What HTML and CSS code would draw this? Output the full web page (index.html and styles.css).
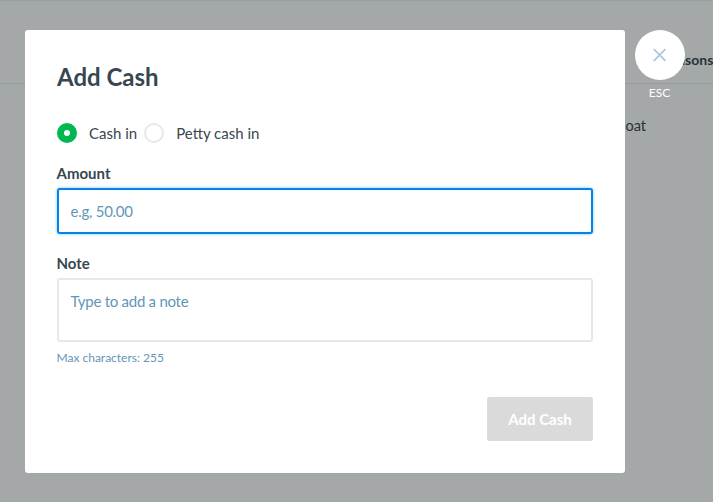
FILE: index.html
```html
<!DOCTYPE html>
<html lang="en">
<head>
<meta charset="utf-8">
<title>Add Cash</title>
<link rel="stylesheet" href="styles.css">
</head>
<body>
<div class="page">
  <div class="row head"><span>Reasons</span></div>
  <div class="row cell"><span>Float</span></div>
</div>
<div class="overlay">
  <form class="modal">
    <h1 class="title">Add Cash</h1>
    <div class="radios">
      <label class="radio"><span class="dot on"></span>Cash in</label>
      <label class="radio"><span class="dot"></span>Petty cash in</label>
    </div>
    <label class="label" for="amount">Amount</label>
    <input class="field amount" id="amount" type="text" placeholder="e.g, 50.00">
    <label class="label" for="note">Note</label>
    <textarea class="field note" id="note" placeholder="Type to add a note"></textarea>
    <p class="hint">Max characters: 255</p>
    <button class="submit" type="button" disabled>Add Cash</button>
  </form>
  <div class="closer">
    <button class="close" type="button" aria-label="Close">
      <svg width="14" height="14" viewBox="0 0 14 14"><path d="M.8 1.2 12.4 12.8M12.4 1.2 .8 12.8"/></svg>
    </button>
    <span class="esc">ESC</span>
  </div>
</div>
</body>
</html>
```
FILE: styles.css
```css
* { box-sizing: border-box; }
body {
  margin: 0;
  height: 502px;
  overflow: hidden;
  position: relative;
  background: #a4a8a9;
  color: #37474f;
  font: 15px/20px Lato, "Liberation Sans", sans-serif;
}
.page { border-top: 1px solid #9a9fa0; color: #263238; }
.row { display: flex; align-items: center; }
.row span { width: 54px; margin-left: auto; }
.head {
  height: 83px;
  padding-top: 35px;
  border-bottom: 1px solid #979c9e;
  font-size: 14px;
  font-weight: 700;
}
.head span { margin-right: -3px; }
.cell { height: 83px; font-size: 14.5px; }
.cell span { width: 99px; }
.overlay {
  position: absolute;
  inset: 0;
  display: flex;
  align-items: flex-start;
  gap: 10px;
  padding: 30px 0 0 25px;
}
.modal {
  width: 600px;
  height: 443px;
  padding: 32px;
  background: #fff;
  border-radius: 3px;
  display: flex;
  flex-direction: column;
}
.title { margin: 0 0 31px; font-size: 24px; line-height: 30px; font-weight: 700; }
.radios { display: flex; gap: 7px; height: 20px; margin-bottom: 20px; }
.radio { display: flex; gap: 12px; white-space: nowrap; }
.dot { width: 20px; height: 20px; border: 2px solid #e3e9ec; border-radius: 50%; }
.dot.on { border: 7px solid #00b84f; }
.label { font-weight: 700; margin-bottom: 5px; text-indent: -.5px; }
.field {
  display: block;
  width: 536px;
  border: 2px solid #e3e9ec;
  border-radius: 3px;
  background: #fff;
  outline: 0;
  color: inherit;
  font: inherit;
  letter-spacing: -.26px;
  resize: none;
}
.field::placeholder { color: #6196b8; opacity: 1; }
.amount {
  height: 46px;
  padding: 0 11.5px;
  margin-bottom: 19px;
  border-color: #0683ea;
  box-shadow: 0 0 3px #62c4fa;
}
.note { height: 64px; padding: 11px 11.5px; overflow: hidden; }
.hint { margin: 6px 0 0; color: #6196b8; font-size: 12px; text-indent: -.5px; }
.submit {
  align-self: flex-end;
  margin-top: auto;
  width: 106px;
  height: 44px;
  padding: 0;
  border: 0;
  border-radius: 3px;
  background: #dadada;
  color: #fff;
  font: 700 15px/20px Lato, "Liberation Sans", sans-serif;
}
.closer { display: flex; flex-direction: column; align-items: center; width: 50px; }
.close {
  width: 50px;
  height: 50px;
  padding: 0;
  border: 0;
  border-radius: 50%;
  background: #fff;
  display: grid;
  place-items: center;
}
.close path { fill: none; stroke: #a9c6dc; stroke-width: 1.7; }
.esc { margin: 3px 1px 0 0; color: #fff; font-size: 12px; }
```
